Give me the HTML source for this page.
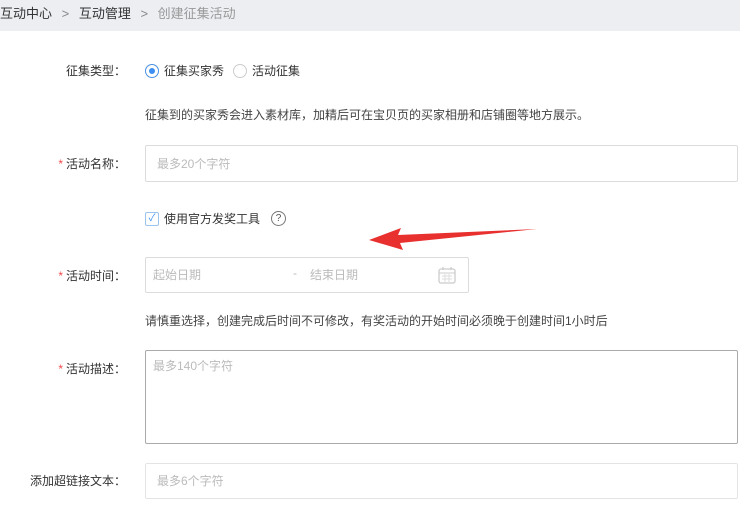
<!DOCTYPE html>
<html><head><meta charset="utf-8"><style>
*{margin:0;padding:0;box-sizing:border-box}
body{width:740px;height:512px;background:#fff;position:relative;overflow:hidden;font-family:"Liberation Sans","Noto Sans CJK SC",sans-serif;font-size:12px;color:#333}
.a{position:absolute;white-space:nowrap}
.hdr{position:absolute;left:0;top:0;width:740px;height:31px;background:#eceef2}
.lbl{position:absolute;right:614px;white-space:nowrap;color:#333}
.req{color:#f04a4a;margin-right:3px}
.box{position:absolute;border:1px solid #dcdcdc;border-radius:2px;background:#fff}
.ph{color:#bbb}
</style></head><body>
<div class="hdr"></div>
<div class="a" style="left:0;top:3px;font-size:13px;color:#333">互动中心 <span style="color:#888;margin:0 6px">&gt;</span> 互动管理 <span style="color:#888;margin:0 6px">&gt;</span> <span style="color:#999">创建征集活动</span></div>

<div class="lbl" style="top:62px">征集类型：</div>
<div class="a" style="left:145px;top:64px;width:14px;height:14px;border:1px solid #4a90e2;border-radius:50%"><div style="position:absolute;left:3px;top:3px;width:6px;height:6px;border-radius:50%;background:#3c8ef0"></div></div>
<div class="a" style="left:164px;top:62px">征集买家秀</div>
<div class="a" style="left:233px;top:64px;width:14px;height:14px;border:1px solid #ccc;border-radius:50%"></div>
<div class="a" style="left:252px;top:62px">活动征集</div>

<div class="a" style="left:145px;top:106px;color:#444">征集到的买家秀会进入素材库，加精后可在宝贝页的买家相册和店铺圈等地方展示。</div>

<div class="lbl" style="top:155px"><span class="req">*</span>活动名称：</div>
<div class="box" style="left:145px;top:145px;width:593px;height:37px"><span class="a ph" style="left:11px;top:9px">最多20个字符</span></div>

<div class="a" style="left:145px;top:212px;width:14px;height:14px;border:1px solid #9cc2ee;border-radius:2px;color:#3c8ef0;font-size:10px;line-height:12px;text-align:center">✓</div>
<div class="a" style="left:164px;top:210px">使用官方发奖工具</div>
<div class="a" style="left:271px;top:211px;width:15px;height:15px;border:1px solid #777;border-radius:50%;font-size:10px;line-height:13px;text-align:center;color:#555">?</div>

<div class="lbl" style="top:267px"><span class="req">*</span>活动时间：</div>
<div class="box" style="left:145px;top:257px;width:324px;height:36px">
<span class="a ph" style="left:7px;top:8px">起始日期</span>
<span class="a ph" style="left:147px;top:8px">-</span>
<span class="a ph" style="left:164px;top:8px">结束日期</span>
<svg class="a" style="left:292px;top:9px" width="18" height="17" viewBox="0 0 18 17"><rect x="1" y="2" width="16" height="14" rx="2" fill="none" stroke="#ccc" stroke-width="1.3"/><line x1="1" y1="6" x2="17" y2="6" stroke="#ccc"/><line x1="5" y1="0" x2="5" y2="3" stroke="#ccc" stroke-width="1.3"/><line x1="13" y1="0" x2="13" y2="3" stroke="#ccc" stroke-width="1.3"/><path d="M4 9h10M4 12h10M7 7v8M11 7v8" stroke="#ddd"/></svg>
</div>

<div class="a" style="left:145px;top:312px;color:#444">请慎重选择，创建完成后时间不可修改，有奖活动的开始时间必须晚于创建时间1小时后</div>

<div class="lbl" style="top:360px"><span class="req">*</span>活动描述：</div>
<div class="box" style="left:145px;top:350px;width:593px;height:94px;border-color:#aaa"><span class="a ph" style="left:7px;top:6px">最多140个字符</span></div>

<div class="lbl" style="top:472px">添加超链接文本：</div>
<div class="box" style="left:145px;top:463px;width:593px;height:36px;border-color:#e4e4e4"><span class="a ph" style="left:11px;top:8px">最多6个字符</span></div>

<svg class="a" style="left:0;top:0" width="740" height="512"><path d="M537 229 L398 235 L401 228 L369 240 L403 250 L400 243 Z" fill="#e8302f"/></svg>
</body></html>
